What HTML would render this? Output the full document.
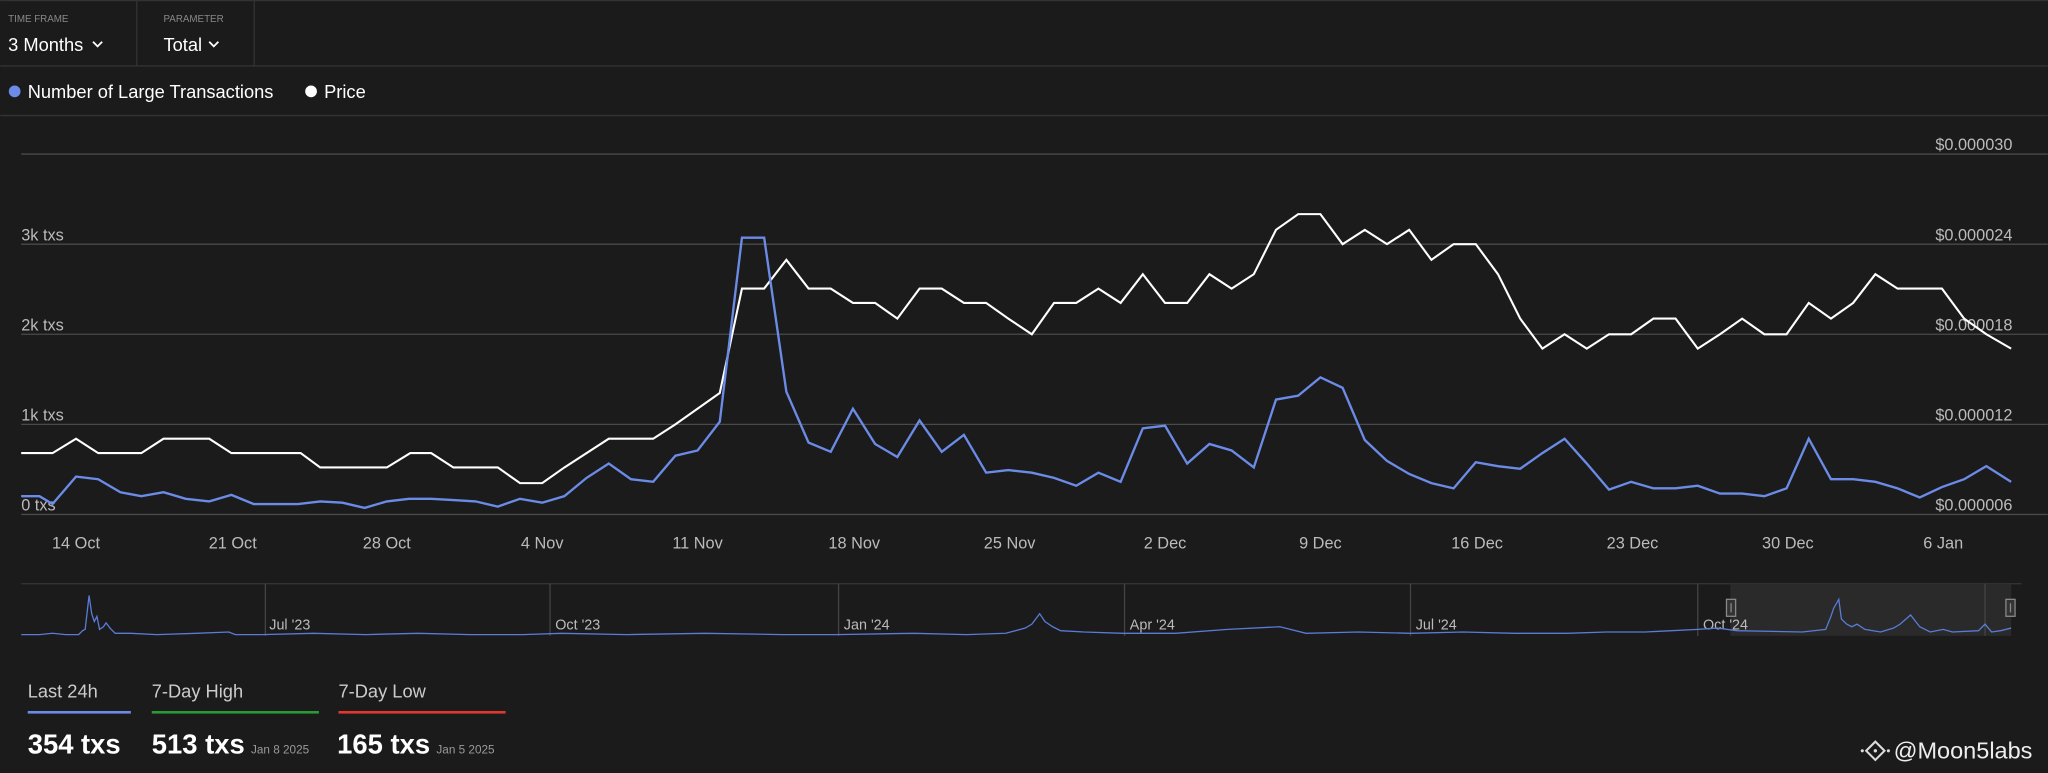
<!DOCTYPE html>
<html><head><meta charset="utf-8"><style>
html,body{margin:0;padding:0;background:#1b1b1c;overflow:hidden}
svg{display:block;font-family:"Liberation Sans",Arial,sans-serif}
</style></head><body>
<svg width="2048" height="773" viewBox="0 0 1568 592" xmlns="http://www.w3.org/2000/svg">
<rect width="1568" height="592" fill="#1b1b1c"/>
<line x1="0" y1="0.5" x2="1568" y2="0.5" stroke="#333"/>
<line x1="0" y1="50.5" x2="1568" y2="50.5" stroke="#333"/>
<line x1="104.5" y1="0" x2="104.5" y2="50" stroke="#333"/>
<line x1="194.5" y1="0" x2="194.5" y2="50" stroke="#333"/>
<text x="6" y="17" font-size="7.5" fill="#888">TIME FRAME</text>
<text x="125" y="17" font-size="7.5" fill="#888">PARAMETER</text>
<text x="6" y="39" font-size="14" fill="#fff">3 Months</text>
<path d="M71 32 l3.5 3.5 l3.5 -3.5" stroke="#fff" stroke-width="1.4" fill="none"/>
<text x="125" y="39" font-size="14" fill="#fff">Total</text>
<path d="M160 32 l3.5 3.5 l3.5 -3.5" stroke="#fff" stroke-width="1.4" fill="none"/>
<circle cx="11" cy="70" r="4.5" fill="#6b8be6"/>
<text x="21" y="75" font-size="14" fill="#fff">Number of Large Transactions</text>
<circle cx="238" cy="70" r="4.5" fill="#fff"/>
<text x="248" y="75" font-size="14" fill="#fff">Price</text>
<line x1="0" y1="88.5" x2="1568" y2="88.5" stroke="#333"/>
<g stroke="#4a4a4a" stroke-width="1">
<line x1="16" y1="118" x2="1568" y2="118"/><line x1="16" y1="187" x2="1568" y2="187"/>
<line x1="16" y1="256" x2="1568" y2="256"/><line x1="16" y1="325" x2="1568" y2="325"/>
<line x1="16" y1="394" x2="1568" y2="394"/></g>
<g font-size="12.5" fill="#bbb">
<text x="16" y="184">3k txs</text><text x="16" y="253">2k txs</text><text x="16" y="322">1k txs</text><text x="16" y="391">0 txs</text>
<g text-anchor="end"><text x="1541" y="115">$0.000030</text><text x="1541" y="184">$0.000024</text><text x="1541" y="253">$0.000018</text><text x="1541" y="322">$0.000012</text><text x="1541" y="391">$0.000006</text></g>
<g text-anchor="middle"><text x="58" y="420">14 Oct</text><text x="178" y="420">21 Oct</text><text x="296" y="420">28 Oct</text><text x="415" y="420">4 Nov</text><text x="534" y="420">11 Nov</text><text x="654" y="420">18 Nov</text><text x="773" y="420">25 Nov</text><text x="892" y="420">2 Dec</text><text x="1011" y="420">9 Dec</text><text x="1131" y="420">16 Dec</text><text x="1250" y="420">23 Dec</text><text x="1369" y="420">30 Dec</text><text x="1488" y="420">6 Jan</text></g>
</g>
<polyline fill="none" stroke="#fff" stroke-width="1.6" points="16,347 40,347 58,336 75,347 108,347 125,336 160,336 177,347 230,347 245,358 296,358 314,347 330,347 347,358 381,358 398,370 415,370 432,358 466,336 500,336 517,325 551,301 568,221 585,221 602,199 619,221 636,221 653,232 670,232 687,244 704,221 721,221 738,232 755,232 772,244 790,256 807,232 824,232 841,221 858,232 875,210 892,232 909,232 926,210 943,221 960,210 977,176 994,164 1011,164 1028,187 1045,176 1062,187 1079,176 1096,199 1113,187 1130,187 1147,210 1164,244 1181,267 1198,256 1215,267 1232,256 1249,256 1266,244 1283,244 1300,267 1317,256 1334,244 1351,256 1368,256 1385,232 1402,244 1419,232 1436,210 1453,221 1470,221 1487,221 1504,244 1521,256 1540,267"/>
<polyline fill="none" stroke="#6b8be6" stroke-width="1.8" points="16,380 30,380 40,386 58,365 75,367 92,377 108,380 125,377 142,382 160,384 177,379 194,386 211,386 228,386 245,384 262,385 279,389 296,384 313,382 330,382 347,383 364,384 381,388 398,382 415,385 432,380 449,366 466,355 483,367 500,369 517,349 534,345 551,323 568,182 585,182 602,300 619,339 636,346 653,313 670,340 687,350 704,322 721,346 738,333 755,362 772,360 790,362 807,366 824,372 841,362 858,369 875,328 892,326 909,355 926,340 943,345 960,358 977,306 994,303 1011,289 1028,297 1045,337 1062,353 1079,363 1096,370 1113,374 1130,354 1147,357 1164,359 1181,347 1198,336 1215,355 1232,375 1249,369 1266,374 1283,374 1300,372 1317,378 1334,378 1351,380 1368,374 1385,336 1402,367 1419,367 1436,369 1453,374 1470,381 1487,373 1504,367 1521,357 1540,369"/>
<line x1="16" y1="447" x2="1548" y2="447" stroke="#333"/>
<rect x="1325" y="447" width="215" height="40" fill="#2a2a2b"/>
<g stroke="#444"><line x1="203" y1="447" x2="203" y2="487"/><line x1="421" y1="447" x2="421" y2="487"/><line x1="642" y1="447" x2="642" y2="487"/><line x1="861" y1="447" x2="861" y2="487"/><line x1="1080" y1="447" x2="1080" y2="487"/><line x1="1300" y1="447" x2="1300" y2="487"/><line x1="1520" y1="447" x2="1520" y2="487"/></g>
<g font-size="11" fill="#bbb"><text x="206" y="482">Jul '23</text><text x="425" y="482">Oct '23</text><text x="646" y="482">Jan '24</text><text x="865" y="482">Apr '24</text><text x="1084" y="482">Jul '24</text><text x="1304" y="482">Oct '24</text></g>
<polyline fill="none" stroke="#5a7bd6" stroke-width="1" points="16,486 30,486 40,485 50,486 60,486 63,483 65,482 68,456 70,470 72,476 74,472 76,482 79,480 81,477 84,481 88,485 100,485 120,486 150,485 175,484 180,486 200,486 240,485 280,486 320,485 360,486 400,486 430,485 480,486 540,485 600,486 640,486 700,485 740,486 770,485 785,481 790,478 796,470 800,476 806,480 812,483 830,484 860,485 900,485 940,482 980,480 1000,485 1040,484 1080,485 1120,484 1160,485 1200,485 1230,484 1260,484 1280,483 1300,482 1315,481 1330,483 1380,484 1398,482 1402,472 1404,466 1408,459 1410,474 1414,478 1418,480 1422,478 1428,482 1440,484 1450,481 1455,478 1463,471 1470,480 1478,484 1488,482 1495,484 1515,483 1520,478 1525,484 1532,483 1540,481"/>
<g fill="#333" stroke="#888" stroke-width="1"><rect x="1322" y="459" width="7" height="13"/><rect x="1536" y="459" width="7" height="13"/></g>
<g stroke="#888"><line x1="1325.5" y1="462" x2="1325.5" y2="469"/><line x1="1539.5" y1="462" x2="1539.5" y2="469"/></g>
<g font-size="14" fill="#ccc"><text x="21" y="534">Last 24h</text><text x="116" y="534">7-Day High</text><text x="259" y="534">7-Day Low</text></g>
<rect x="21" y="544.5" width="79" height="2" fill="#6b8be6"/>
<rect x="116" y="544.5" width="128" height="2" fill="#2a9b34"/>
<rect x="259" y="544.5" width="128" height="2" fill="#e0382c"/>
<g font-size="21" font-weight="bold" fill="#fff"><text x="21" y="577">354 txs</text><text x="116" y="577">513 txs</text><text x="258" y="577">165 txs</text></g>
<g font-size="9" fill="#999"><text x="192" y="577">Jan 8 2025</text><text x="334" y="577">Jan 5 2025</text></g>
<g transform="translate(1436,575)" fill="none" stroke="#ddd" stroke-width="1.6">
<path d="M0 -7 L7 0 L0 7 L-7 0 Z"/><circle cx="0" cy="0" r="1.3" fill="#ddd" stroke="none"/>
<circle cx="-10" cy="0" r="1.2" fill="#ddd" stroke="none"/><circle cx="10" cy="0" r="1.2" fill="#ddd" stroke="none"/></g>
<text x="1450" y="581" font-size="18" fill="#eee">@Moon5labs</text>
</svg>
</body></html>
